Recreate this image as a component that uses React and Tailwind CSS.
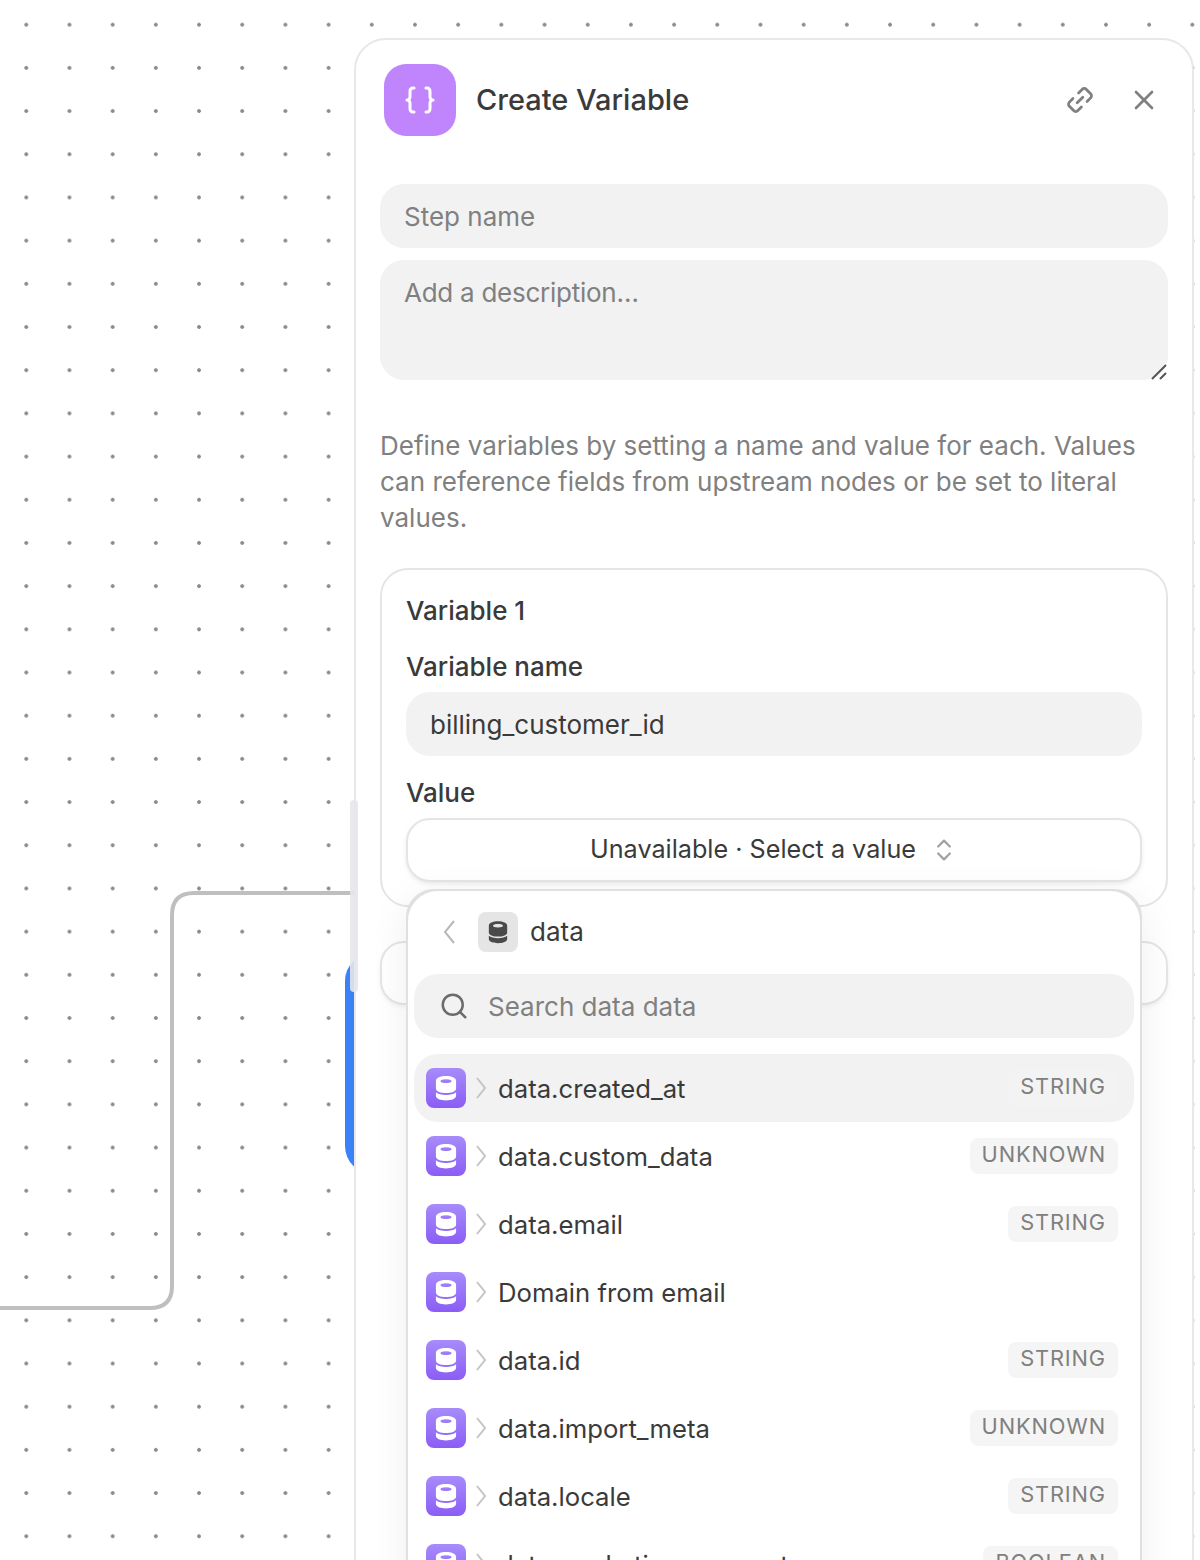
import { X, Search, ChevronsUpDown } from 'lucide-react'

const ROWS = [
  { label: 'data.created_at', type: 'STRING', active: true },
  { label: 'data.custom_data', type: 'UNKNOWN' },
  { label: 'data.email', type: 'STRING' },
  { label: 'Domain from email' },
  { label: 'data.id', type: 'STRING' },
  { label: 'data.import_meta', type: 'UNKNOWN' },
  { label: 'data.locale', type: 'STRING' },
  { label: 'data.marketing_consent', type: 'BOOLEAN' },
]

function DbGlyph({ className }) {
  return (
    <svg viewBox="0 0 24 28" className={className} fill="currentColor">
      <path
        fillRule="evenodd"
        d="M1 6.500C1 2.800 6 1 12 1s11 1.800 11 5.500v8c0 3.200-5 5-11 5s-11-1.800-11-5zM12 4.500c-3.600 0-6 .8-6 2s2.400 2 6 2 6-.8 6-2-2.400-2-6-2z"
      />
      <path d="M1 18.500c2.200 2 6.300 3 11 3s8.800-1 11-3v4c0 3.200-5 5-11 5s-11-1.800-11-5z" />
    </svg>
  )
}

function TypeBadge({ type, active }) {
  if (!type) return null
  return (
    <span
      className={`flex h-9 items-center rounded-lg px-3 pb-[3px] text-[21.8px] leading-none tracking-[0.04em] text-[#808080] ${active ? 'bg-[#f3f3f3]' : 'bg-[#f5f5f5]'}`}
    >
      {type}
    </span>
  )
}

function FieldRow({ row }) {
  return (
    <div className={`flex h-[68px] shrink-0 items-center rounded-3xl pl-3 pr-4 ${row.active ? 'bg-[#f2f2f2]' : ''}`}>
      <div className="grid h-10 w-10 shrink-0 place-items-center rounded-lg bg-gradient-to-b from-[#a78bfa] to-[#8b5cf6] text-white">
        <DbGlyph className="h-[26px] w-[22px]" />
      </div>
      <svg className="ml-[9px] shrink-0" width="12" height="22" viewBox="0 0 12 22" fill="none" stroke="#c4c4c4" strokeWidth="2">
        <path d="M2 1l8 10-8 10" />
      </svg>
      <span className="ml-[11px] flex-1 pt-[2px] text-[25.7px] leading-9 text-[#3a3a3a]">{row.label}</span>
      <TypeBadge type={row.type} active={row.active} />
    </div>
  )
}

export default function App() {
  return (
    <div className="relative h-[1560px] w-[1200px] overflow-hidden bg-white bg-[radial-gradient(circle,#8a8a8a_1.5px,transparent_2.2px)] bg-[length:43.2px_43.2px] bg-[position:4.7px_3.1px] font-['Inter',sans-serif]">
      <svg className="absolute left-0 top-0" width="360" height="1320" fill="none">
        <path d="M0 1308H150Q172 1308 172 1286V915Q172 893 194 893H360" stroke="#bfbfbf" strokeWidth="4" />
      </svg>
      <div className="absolute left-[345px] top-[953px] h-[221px] w-10 rounded-l-[28px] bg-[#3b82f6]" />

      <div className="absolute left-[354px] top-[38px] h-[1600px] w-[840px] rounded-[32px] border-2 border-[#e8e8e8] bg-white px-6 pt-6">
        <div className="flex h-[72px] items-center pl-1">
          <div className="grid h-[72px] w-[72px] place-items-center rounded-[22px] bg-[#c084fc] text-white">
            <svg width="30" height="28" viewBox="0 0 30 28" fill="none" stroke="currentColor" strokeWidth="3" strokeLinecap="round" strokeLinejoin="round">
              <path d="M9 2H8a3 3 0 0 0-3 3v6a3 3 0 0 1-3 3 3 3 0 0 1 3 3v6a3 3 0 0 0 3 3h1" />
              <path d="M21 2h1a3 3 0 0 1 3 3v6a3 3 0 0 0 3 3 3 3 0 0 0-3 3v6a3 3 0 0 1-3 3h-1" />
            </svg>
          </div>
          <h1 className="ml-5 flex-1 text-[29px] font-medium leading-10 text-[#3a3a3a]">Create Variable</h1>
          <svg className="mr-8 -rotate-45" width="32" height="32" viewBox="0 0 32 32" fill="none" stroke="#808080" strokeWidth="2.800" strokeLinecap="round" strokeLinejoin="round">
            <path d="M12 22H7a3 3 0 0 1-3-3v-6a3 3 0 0 1 3-3h5" />
            <path d="M20 10h5a3 3 0 0 1 3 3v6a3 3 0 0 1-3 3h-5" />
            <path d="M12 16h8" />
          </svg>
          <X className="mr-[8px] h-8 w-8 text-[#808080]" strokeWidth={2} />
        </div>

        <div className="mt-12 flex h-16 items-center rounded-3xl bg-[#f2f2f2] px-6 pt-[1px] text-[26px] text-[#808080]">Step name</div>
        <div className="relative mt-3 h-[120px] rounded-3xl bg-[#f2f2f2] px-6 pt-[15px] text-[26px] leading-9 tracking-[-0.01em] text-[#808080]">
          Add a description…
          <svg className="absolute bottom-0 right-0" width="18" height="18" viewBox="0 0 18 18" stroke="#555" strokeWidth="2" fill="none">
            <path d="M2 17L16 3M10 17l6-6" />
          </svg>
        </div>

        <p className="mt-[48px] text-[26px] leading-9 text-[#808080]">
          Define variables by setting a name and value for each. Values can reference fields from upstream nodes or be set to literal values.
        </p>

        <div className="mt-[32px] h-[339px] rounded-[28px] border-2 border-[#e5e5e5] px-6 pt-[23px]">
          <div className="text-[26px] font-medium leading-9 text-[#3a3a3a]">Variable 1</div>
          <div className="mt-5 text-[26px] font-medium leading-9 text-[#3a3a3a]">Variable name</div>
          <div className="mt-[7px] flex h-16 items-center rounded-3xl bg-[#f2f2f2] px-6 pt-[1px] text-[26px] text-[#3a3a3a]">billing_customer_id</div>
          <div className="mt-[19px] text-[26px] font-medium leading-9 text-[#3a3a3a]">Value</div>
          <div className="mt-[7px] flex h-16 items-center justify-center rounded-3xl border-2 border-[#e5e5e5] bg-white text-[25.2px] text-[#3a3a3a] shadow-[0_2px_4px_rgba(0,0,0,0.08)]">
            Unavailable · Select a value
            <ChevronsUpDown className="ml-[14px] h-7 w-7 text-[#a3a3a3]" strokeWidth={2} />
          </div>
        </div>

        <div className="mt-[34px] h-16 rounded-3xl border-2 border-[#e5e5e5] bg-white shadow-[0_2px_4px_rgba(0,0,0,0.06)]" />

        <div className="absolute left-[50px] top-[849px] h-[760px] w-[736px] rounded-[28px] border-2 border-[#e5e5e5] bg-white" />
        <div className="absolute left-[50px] top-[849px] h-[760px] w-[736px] rounded-[32px] border-2 border-[#e0e0e0] bg-white px-1.5 pt-[21px] shadow-[0_8px_40px_rgba(0,0,0,0.07)]">
          <div className="flex h-10 items-center pl-[29px]">
            <svg className="shrink-0" width="12" height="24" viewBox="0 0 12 24" fill="none" stroke="#b8b8b8" strokeWidth="2">
              <path d="M11 1L2 12l9 11" />
            </svg>
            <div className="ml-[23px] grid h-10 w-10 place-items-center rounded-lg bg-[#e5e5e5] text-[#4a4a4a]">
              <DbGlyph className="h-[24px] w-[20px]" />
            </div>
            <span className="ml-3 text-[26px] leading-9 text-[#3a3a3a]">data</span>
          </div>
          <div className="mt-[22px] flex h-16 items-center rounded-3xl bg-[#f2f2f2] pl-[25px] text-[26px] text-[#808080]">
            <Search className="h-[30px] w-[30px] text-[#6b6b6b]" strokeWidth={2} />
            <span className="ml-[19px]">Search data data</span>
          </div>
          <div className="mt-4 flex flex-col">
            {ROWS.map((row) => (
              <FieldRow key={row.label} row={row} />
            ))}
          </div>
        </div>
      </div>

      <div className="absolute left-[350px] top-[800px] h-[192px] w-2 rounded-full bg-[#e5e7eb]/90" />
    </div>
  )
}
